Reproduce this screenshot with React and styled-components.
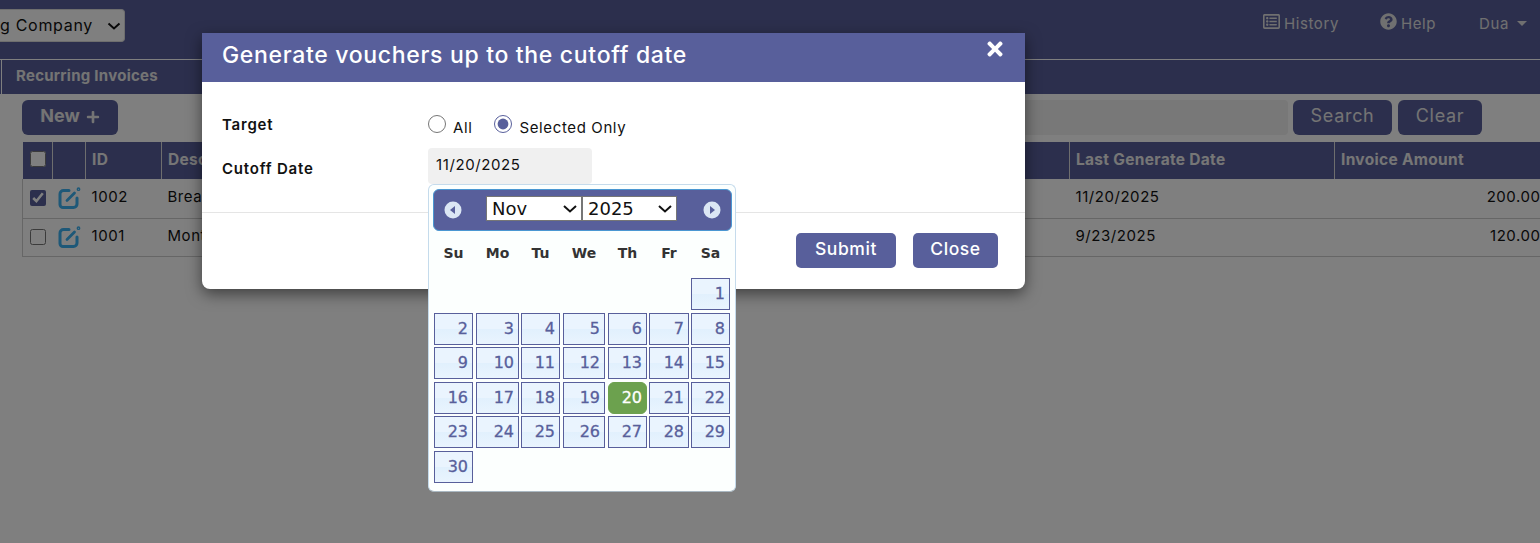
import React from 'react';
import styled, { createGlobalStyle } from 'styled-components';
import { FaRegListAlt, FaQuestionCircle, FaTimes, FaPlus } from 'react-icons/fa';

const primary = '#585f9b';
const chevron = `url("data:image/svg+xml,%3Csvg xmlns='http://www.w3.org/2000/svg' width='14' height='8'%3E%3Cpath d='M1 1l6 5.5L13 1' fill='none' stroke='%23111' stroke-width='2'/%3E%3C/svg%3E")`;

const Global = createGlobalStyle`
  html, body { margin: 0; padding: 0; height: 100%; background: #fff; }
  body { font-family: Inter, "Open Sans", sans-serif; color: #111; overflow: hidden; }
  #root { height: 543px; }
  * { box-sizing: border-box; }
`;

const Page = styled.div`
  position: relative;
  width: 1540px;
  height: 543px;
  overflow: hidden;
`;
const NavBar = styled.header`
  height: 60px;
  background: ${primary};
  border-bottom: 1px solid #fff;
  display: flex;
  align-items: flex-start;
  justify-content: space-between;
  padding-top: 9px;
`;
const CompanySelect = styled.div`
  width: 125px;
  height: 33px;
  background: #fff;
  border: 1px solid #ddd;
  border-left: 0;
  border-radius: 0 4px 4px 0;
  display: flex;
  align-items: center;
  justify-content: space-between;
  padding: 0 3px 2px 0;
  font-size: 16px;
  letter-spacing: 0.7px;
  white-space: nowrap;
  color: #111;
`;
const Chevron = styled.svg`
  width: 14px;
  height: 8px;
  margin-top: 3px;
`;
const NavLinks = styled.nav`
  display: flex;
  align-items: center;
  height: 28px;
  margin-right: 13px;
`;
const NavLink = styled.span`
  display: inline-flex;
  align-items: center;
  gap: 4px;
  margin-left: ${p => p.$ml || 0}px;
  color: #e0e0e0;
  font-size: 15px;
  letter-spacing: 0.6px;
  svg { font-size: 17px; margin-top: -3px; }
`;
const Caret = styled.span`
  width: 0;
  height: 0;
  margin-left: 4px;
  border-left: 5px solid transparent;
  border-right: 5px solid transparent;
  border-top: 5px solid #e0e0e0;
`;
const TabStrip = styled.div`
  height: 34px;
  background: ${primary};
  padding-left: 1px;
`;
const Tab = styled.div`
  height: 34px;
  width: 180px;
  border-left: 1px solid #fff;
  padding: 6px 0 0 14px;
  font-size: 15px;
  font-weight: 700;
  letter-spacing: 0.27px;
  color: #e8e8e8;
`;
const Toolbar = styled.div`
  display: flex;
  align-items: center;
  height: 35px;
  margin-top: 6px;
  padding-left: 22px;
`;
const ToolButton = styled.button`
  height: 35px;
  width: ${p => p.$w}px;
  margin-left: ${p => p.$ml || 0}px;
  padding: 0 0 5px;
  border: 0;
  border-radius: 6px;
  background: ${primary};
  color: #e8e8e8;
  font: ${p => p.$bold ? 700 : 400} 18px Inter, sans-serif;
  letter-spacing: ${p => p.$bold ? 0 : 0.7}px;
  display: inline-flex;
  align-items: center;
  justify-content: center;
  gap: 6px;
  svg { font-size: 14px; margin-top: 3px; }
`;
const SearchBox = styled.div`
  width: 800px;
  height: 35px;
  margin-left: 370px;
  background: #f0f0f0;
  border-radius: 4px;
`;
const Table = styled.table`
  width: 1522px;
  margin: 7px 0 0 22px;
  border-collapse: collapse;
  table-layout: fixed;
  font-size: 15px;
  letter-spacing: 0.55px;
`;
const HeadCell = styled.th`
  height: 37px;
  padding: 0 6px 3px;
  background: ${primary};
  color: #ececec;
  font-size: 15.5px;
  font-weight: 700;
  letter-spacing: 0.3px;
  text-align: left;
  border-right: 1px solid #ddd;
  &:last-child { border-right: 0; }
`;
const Row = styled.tr`
  height: ${p => p.$h}px;
  border-bottom: 1px solid #ccc;
`;
const Cell = styled.td`
  padding: 0 4px 4px 6px;
  text-align: ${p => p.$right ? 'right' : 'left'};
  white-space: nowrap;
  overflow: hidden;
  &:first-child { border-left: 1px solid #ccc; }
`;
const CheckCell = styled.td`
  padding: 0 0 1px 7px;
  border-left: 1px solid #ccc;
`;
const IconCell = styled.td`
  padding: 0 0 0 5px;
`;
const Check = styled.input`
  display: block;
  width: 16px;
  height: 16px;
  margin: 0 0 0 ${p => p.$ml || 0}px;
  accent-color: ${primary};
`;
const EditSvg = styled.svg`
  display: block;
  width: 23px;
  height: 22px;
  margin-top: -1px;
  fill: none;
  stroke: #3cb0f0;
  stroke-linecap: round;
`;
const Overlay = styled.div`
  position: absolute;
  inset: 0;
  background: rgba(0, 0, 0, 0.5);
`;
const Modal = styled.section`
  position: absolute;
  left: 202px;
  top: 33px;
  width: 823px;
  height: 256px;
  background: #fff;
  border-radius: 0 0 8px 8px;
  box-shadow: 0 5px 15px rgba(0, 0, 0, 0.5);
  display: flex;
  flex-direction: column;
`;
const ModalHead = styled.div`
  height: 49px;
  background: ${primary};
  display: flex;
  align-items: flex-start;
  justify-content: space-between;
  padding: 0 19px 0 20px;
  color: #fff;
`;
const ModalTitle = styled.h2`
  margin: 8px 0 0;
  font-size: 23px;
  line-height: 28px;
  font-weight: 500;
  letter-spacing: 0.68px;
`;
const CloseX = styled(FaTimes)`
  font-size: 22px;
  margin-top: 5px;
`;
const ModalBody = styled.div`
  height: 131px;
  padding: 33px 20px 0;
  border-bottom: 1px solid #e5e5e5;
`;
const FormRow = styled.div`
  display: grid;
  grid-template-columns: 206px 1fr;
  height: ${p => p.$h}px;
`;
const FormLabel = styled.label`
  font-size: 15px;
  font-weight: 600;
  letter-spacing: 0.8px;
  padding-top: ${p => p.$pt || 0}px;
  line-height: 20px;
  color: #111;
`;
const RadioGroup = styled.div`
  display: flex;
  align-items: flex-start;
  margin-top: -2px;
`;
const RadioOption = styled.label`
  display: inline-flex;
  align-items: flex-start;
  margin-right: 22px;
  font-size: 15px;
  font-weight: 400;
  letter-spacing: 0.62px;
  span { margin: 5px 0 0 7px; line-height: 20px; }
  input {
    width: 18px;
    height: 18px;
    margin: 2px 0 0;
    accent-color: ${primary};
  }
`;
const DateField = styled.div`
  width: 164px;
  height: 36px;
  margin-top: -3px;
  padding: 6px 8px;
  background: #f0f0f0;
  border-radius: 4px;
  font-weight: 400;
  font-size: 15px;
  line-height: 22px;
  letter-spacing: 0.6px;
`;
const ModalFoot = styled.div`
  display: flex;
  justify-content: flex-end;
  gap: 17px;
  padding: 20px 27px 0 0;
`;
const FootButton = styled.button`
  width: ${p => p.$w}px;
  height: 35px;
  padding: 0 0 4px;
  border: 0;
  border-radius: 5px;
  background: ${primary};
  color: #fff;
  font: 500 17.5px Inter, sans-serif;
  letter-spacing: 0.6px;
`;
const Calendar = styled.div`
  position: absolute;
  left: 428px;
  top: 184px;
  width: 308px;
  height: 308px;
  padding: 4px 4px;
  background: #fcfffe;
  border: 1px solid #c5dbec;
  border-bottom-color: #aab8c2;
  border-radius: 6px;
  font-family: "DejaVu Sans", sans-serif;
`;
const CalHead = styled.div`
  height: 42px;
  width: 299px;
  background: ${primary};
  border: 1px solid #4a97d2;
  border-radius: 6px;
  display: flex;
  align-items: center;
  justify-content: space-between;
  padding: 0 10px 0 10px;
`;
const NavDot = styled.svg`
  width: 18px;
  height: 18px;
`;
const MonthYear = styled.div`
  display: flex;
  margin: 0 2px 3px 0;
`;
const CalSelect = styled.select`
  appearance: none;
  width: ${p => p.$w}px;
  height: 25px;
  padding: 0 0 0 5px;
  margin: 0;
  background: #fff ${chevron} no-repeat right 4px center;
  border: 1px solid #767676;
  border-radius: 0;
  font: 400 18px "DejaVu Sans", sans-serif;
  color: #111;
`;
const WeekRow = styled.div`
  display: grid;
  grid-template-columns: 42px 45px 42px 45px 41px 42px 39px;
  height: 47px;
  padding: 0 0 3px 1px;
  align-items: center;
  font-size: 14px;
  font-weight: 700;
  color: #333;
`;
const WeekDay = styled.div`
  width: ${p => p.$w}px;
  text-align: center;
`;
const Days = styled.div`
  display: grid;
  grid-template-columns: 42px 45px 42px 45px 41px 42px 39px;
  grid-auto-rows: 32px;
  row-gap: 2.6px;
  padding-left: 1px;
`;
const Day = styled.div`
  width: ${p => p.$w}px;
  height: 32px;
  padding: 4px 4px 0 0;
  text-align: right;
  font-size: 16px;
  line-height: 22px;
  -webkit-text-stroke: 0.3px currentColor;
  color: ${p => p.$today ? '#fff' : primary};
  border: 1px solid ${p => p.$today ? '#6ca14e' : primary};
  border-radius: ${p => p.$today ? 6 : 0}px;
  background: ${p => p.$today ? '#6ca14e' : 'linear-gradient(#eaf4fe 0 50%, #e1f0fd 50%, #e9f4fe 100%)'};
`;

const widths = [39, 43, 39, 42, 39, 40, 39];
const weekDays = ['Su', 'Mo', 'Tu', 'We', 'Th', 'Fr', 'Sa'];
const cells = [...Array(6).fill(null), ...Array.from({ length: 30 }, (_, i) => i + 1)];

const Arrow = ({ dir }) => (
  <NavDot viewBox="0 0 18 18">
    <circle cx="9" cy="9" r="8.5" fill="#dbe6f4" />
    <path d={dir === 'l' ? 'M11 5v8L6 9z' : 'M7 5v8l5-4z'} fill={primary} />
  </NavDot>
);

const EditIcon = () => (
  <EditSvg viewBox="0 0 23 22">
    <path d="M11 3.5H5.5A3.5 3.5 0 0 0 2 7v10.5A3 3 0 0 0 5 20.5h10.5a3.5 3.5 0 0 0 3.5-3.5V11" strokeWidth="3" />
    <path d="M9 13.5 16.5 6" strokeWidth="2.8" />
    <circle cx="20.5" cy="2.2" r="1.2" strokeWidth="1.4" />
  </EditSvg>
);

export default function App() {
  return (
    <Page>
      <Global />
      <NavBar>
        <CompanySelect>
          g Company
          <Chevron viewBox="0 0 14 8"><path d="M1.5 1.5l5.5 5 5.5-5" fill="none" stroke="#111" strokeWidth="2" /></Chevron>
        </CompanySelect>
        <NavLinks>
          <NavLink><FaRegListAlt />History</NavLink>
          <NavLink $ml={41}><FaQuestionCircle />Help</NavLink>
          <NavLink $ml={43}>Dua <Caret /></NavLink>
        </NavLinks>
      </NavBar>
      <TabStrip><Tab>Recurring Invoices</Tab></TabStrip>
      <Toolbar>
        <ToolButton $w={96} $bold>New <FaPlus /></ToolButton>
        <SearchBox />
        <ToolButton $w={99} $ml={5}>Search</ToolButton>
        <ToolButton $w={84} $ml={6}>Clear</ToolButton>
      </Toolbar>
      <Table>
        <colgroup>
          <col width="30" /><col width="33" /><col width="76" /><col width="908" /><col width="265" /><col width="210" />
        </colgroup>
        <thead>
          <tr>
            <HeadCell><Check type="checkbox" readOnly $ml={1} /></HeadCell>
            <HeadCell />
            <HeadCell>ID</HeadCell>
            <HeadCell>Description</HeadCell>
            <HeadCell>Last Generate Date</HeadCell>
            <HeadCell>Invoice Amount</HeadCell>
          </tr>
        </thead>
        <tbody>
          <Row $h={39}>
            <CheckCell><Check type="checkbox" defaultChecked /></CheckCell>
            <IconCell><EditIcon /></IconCell>
            <Cell>1002</Cell>
            <Cell>Breakfast Service</Cell>
            <Cell>11/20/2025</Cell>
            <Cell $right>200.00</Cell>
          </Row>
          <Row $h={38}>
            <CheckCell><Check type="checkbox" /></CheckCell>
            <IconCell><EditIcon /></IconCell>
            <Cell>1001</Cell>
            <Cell>Monthly Rent</Cell>
            <Cell>9/23/2025</Cell>
            <Cell $right>120.00</Cell>
          </Row>
        </tbody>
      </Table>
      <Overlay />
      <Modal>
        <ModalHead>
          <ModalTitle>Generate vouchers up to the cutoff date</ModalTitle>
          <CloseX />
        </ModalHead>
        <ModalBody>
          <FormRow $h={36}>
            <FormLabel>Target</FormLabel>
            <RadioGroup>
              <RadioOption><input type="radio" name="target" /><span>All</span></RadioOption>
              <RadioOption><input type="radio" name="target" defaultChecked /><span>Selected Only</span></RadioOption>
            </RadioGroup>
          </FormRow>
          <FormRow $h={36}>
            <FormLabel $pt={8}>Cutoff Date</FormLabel>
            <DateField>11/20/2025</DateField>
          </FormRow>
        </ModalBody>
        <ModalFoot>
          <FootButton $w={100}>Submit</FootButton>
          <FootButton $w={85}>Close</FootButton>
        </ModalFoot>
      </Modal>
      <Calendar>
        <CalHead>
          <Arrow dir="l" />
          <MonthYear>
            <CalSelect $w={96} defaultValue="Nov"><option>Nov</option></CalSelect>
            <CalSelect $w={95} defaultValue="2025"><option>2025</option></CalSelect>
          </MonthYear>
          <Arrow dir="r" />
        </CalHead>
        <WeekRow>
          {weekDays.map((d, i) => <WeekDay key={d} $w={widths[i]}>{d}</WeekDay>)}
        </WeekRow>
        <Days>
          {cells.map((d, i) => d === null
            ? <span key={i} />
            : <Day key={i} $w={widths[i % 7]} $today={d === 20}>{d}</Day>)}
        </Days>
      </Calendar>
    </Page>
  );
}
